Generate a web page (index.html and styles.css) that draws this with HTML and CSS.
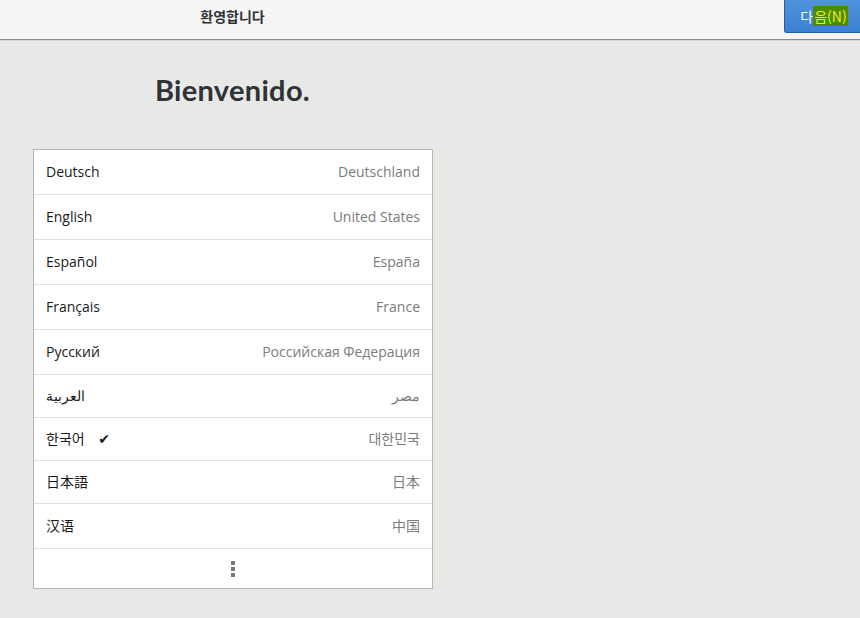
FILE: index.html
```html
<!DOCTYPE html>
<html lang="ko">
<head>
    <meta charset="UTF-8">
    <title>환영합니다</title>
    <link rel="stylesheet" href="styles.css">
</head>
<body>
    <header class="titlebar">
        <div class="titlebar-title">환영합니다</div>
        <button class="next-btn"><span class="plain">다</span><span class="hl">음(N)</span></button>
    </header>

    <main class="welcome">
        <h1 class="welcome-title">Bienvenido.</h1>

        <div class="lang-list">
            <div class="lang-row"><span class="lang">Deutsch</span><span class="region">Deutschland</span></div>
            <div class="lang-row"><span class="lang">English</span><span class="region">United States</span></div>
            <div class="lang-row"><span class="lang">Español</span><span class="region">España</span></div>
            <div class="lang-row"><span class="lang">Français</span><span class="region">France</span></div>
            <div class="lang-row"><span class="lang">Русский</span><span class="region">Российская Федерация</span></div>
            <div class="lang-row short"><span class="lang">العربية</span><span class="region">مصر</span></div>
            <div class="lang-row short"><span class="lang">한국어 <span class="check">✔</span></span><span class="region">대한민국</span></div>
            <div class="lang-row short"><span class="lang">日本語</span><span class="region">日本</span></div>
            <div class="lang-row"><span class="lang">汉语</span><span class="region">中国</span></div>
            <div class="lang-more">
                <span class="dot"></span>
                <span class="dot"></span>
                <span class="dot"></span>
            </div>
        </div>
    </main>
</body>
</html>
```

FILE: styles.css
```css
* {
    margin: 0;
    padding: 0;
    box-sizing: border-box;
}

body {
    font-family: 'Open Sans', 'Noto Sans CJK KR', sans-serif;
    background: #e8e8e7;
    color: #2e3436;
    width: 860px;
    height: 618px;
    overflow: hidden;
}

.titlebar {
    height: 40px;
    background: #f5f5f4;
    border-bottom: 1px solid #8c8c8a;
    box-shadow: 0 1px 0 #d6d6d4;
    display: flex;
    align-items: flex-start;
}

.titlebar-title {
    width: 465px;
    text-align: center;
    font-family: 'Noto Sans CJK KR', sans-serif;
    font-weight: bold;
    font-size: 14px;
    line-height: 33px;
    color: #2e3436;
}

.next-btn {
    margin-left: auto;
    width: 76px;
    height: 33px;
    border: 1px solid #1f5fa6;
    border-top: none;
    border-right: none;
    border-radius: 0 0 0 3px;
    background: linear-gradient(#4f93dc, #3b82d2);
    font-family: 'Noto Sans CJK KR', sans-serif;
    font-size: 14px;
    color: #fff;
    display: flex;
    align-items: center;
    justify-content: center;
    padding-left: 3px;
}

.next-btn .hl {
    background: #4c8a00;
    color: #f2f200;
    padding: 0 1px;
}

.welcome {
    width: 465px;
    display: flex;
    flex-direction: column;
    align-items: center;
}

.welcome-title {
    font-family: 'Lato', sans-serif;
    font-weight: bold;
    font-size: 29px;
    letter-spacing: 0.3px;
    color: #2e3436;
    margin-top: 32px;
    height: 77px;
}

.lang-list {
    align-self: flex-start;
    width: 400px;
    margin-left: 33px;
    background: #fff;
    border: 1px solid #b6b6b3;
}

.lang-row {
    height: 45px;
    padding: 0 12px 2px;
    border-bottom: 1px solid #e0e0de;
    display: flex;
    align-items: center;
    justify-content: space-between;
    font-size: 14px;
}

.lang-row.short {
    height: 43px;
}

.lang {
    color: #1a1a1a;
    font-family: 'Open Sans', 'Noto Sans CJK KR', 'Noto Sans CJK JP', sans-serif;
}

.region {
    color: #7c7c7c;
    font-family: 'Open Sans', 'Noto Sans CJK KR', 'Noto Sans CJK JP', sans-serif;
}

.check {
    font-family: 'DejaVu Sans', sans-serif;
    font-size: 14px;
    margin-left: 10px;
}

.lang-more {
    height: 39px;
    display: flex;
    flex-direction: column;
    align-items: center;
    justify-content: center;
    gap: 2px;
}

.dot {
    width: 4px;
    height: 4px;
    background: #777;
}
```
